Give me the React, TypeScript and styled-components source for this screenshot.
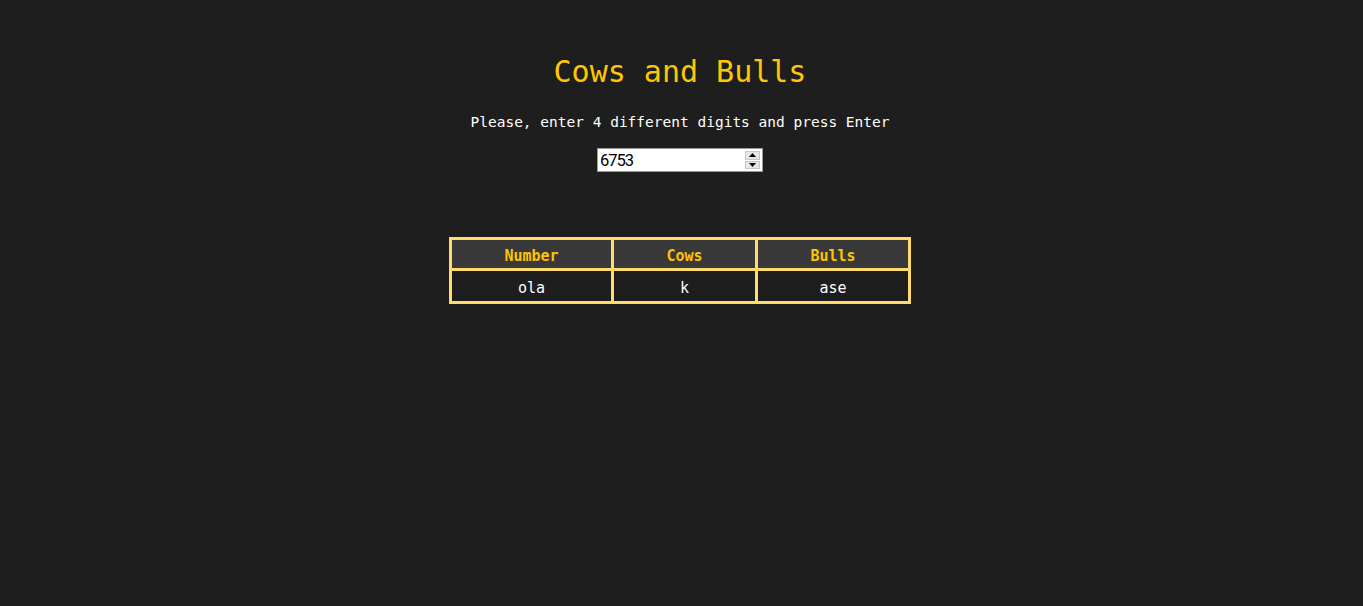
import React from "react";
import styled, { createGlobalStyle } from "styled-components";

const Global = createGlobalStyle`
  html, body { margin: 0; padding: 0; background: #1e1e1e; }
  * { box-sizing: border-box; }
`;

const Page = styled.main`
  min-height: 100vh;
  background: #1e1e1e;
  display: flex;
  flex-direction: column;
  align-items: center;
  padding-right: 3px;
  font-family: "DejaVu Sans Mono", "Liberation Mono", monospace;
  color: #ffffff;
`;

const Title = styled.h1`
  margin: 54px 0 0;
  font-size: 30px;
  line-height: 36px;
  font-weight: normal;
  color: #ffc700;
`;

const Prompt = styled.p`
  margin: 22px 0 0;
  font-size: 14.5px;
  line-height: 20px;
`;

const InputBox = styled.div`
  margin-top: 16px;
  width: 166px;
  height: 24px;
  display: flex;
  align-items: center;
  background: #ffffff;
  border: 1px solid #9a9a9a;
  padding: 0 2px 0 2px;
`;

const NumberField = styled.input`
  flex: 1;
  min-width: 0;
  border: none;
  outline: none;
  background: transparent;
  padding: 0;
  font-family: Roboto, "Noto Sans", sans-serif;
  font-size: 16.5px;
  letter-spacing: -1px;
  color: #000000;
`;

const Spinner = styled.div`
  width: 15px;
  height: 18px;
  display: flex;
  flex-direction: column;
  gap: 1px;
`;

const SpinButton = styled.div`
  flex: 1;
  background: #e6e6e6;
  border: 1px solid #c8c8c8;
  display: flex;
  align-items: center;
  justify-content: center;
`;

const Table = styled.table`
  margin-top: 65px;
  border-collapse: collapse;
  width: 461px;
  table-layout: fixed;
  border: 3px solid #ffdc6c;
`;

const Cell = styled.td<{ $head?: boolean }>`
  border: 3px solid #ffdc6c;
  text-align: center;
  padding: ${(p) => (p.$head ? "3px" : "4px")} 0 0;
  height: ${(p) => (p.$head ? "31px" : "33px")};
  font-size: 15px;
  font-weight: ${(p) => (p.$head ? "bold" : "normal")};
  color: ${(p) => (p.$head ? "#ffc400" : "#ffffff")};
  background: ${(p) => (p.$head ? "#393939" : "#1e1e1e")};
`;

const Arrow = ({ up }: { up?: boolean }) => (
  <svg width="7" height="4" viewBox="0 0 7 4">
    <path d={up ? "M0 4 L3.5 0 L7 4 Z" : "M0 0 L3.5 4 L7 0 Z"} fill="#000" />
  </svg>
);

export default function App() {
  return (
    <>
      <Global />
      <Page>
        <Title>Cows and Bulls</Title>
        <Prompt>Please, enter 4 different digits and press Enter</Prompt>
        <InputBox>
          <NumberField defaultValue="6753" />
          <Spinner>
            <SpinButton>
              <Arrow up />
            </SpinButton>
            <SpinButton>
              <Arrow />
            </SpinButton>
          </Spinner>
        </InputBox>
        <Table>
          <colgroup>
            <col style={{ width: 162 }} />
            <col style={{ width: 144 }} />
            <col style={{ width: 153 }} />
          </colgroup>
          <thead>
            <tr>
              <Cell as="th" $head>Number</Cell>
              <Cell as="th" $head>Cows</Cell>
              <Cell as="th" $head>Bulls</Cell>
            </tr>
          </thead>
          <tbody>
            <tr>
              <Cell>ola</Cell>
              <Cell>k</Cell>
              <Cell>ase</Cell>
            </tr>
          </tbody>
        </Table>
      </Page>
    </>
  );
}
